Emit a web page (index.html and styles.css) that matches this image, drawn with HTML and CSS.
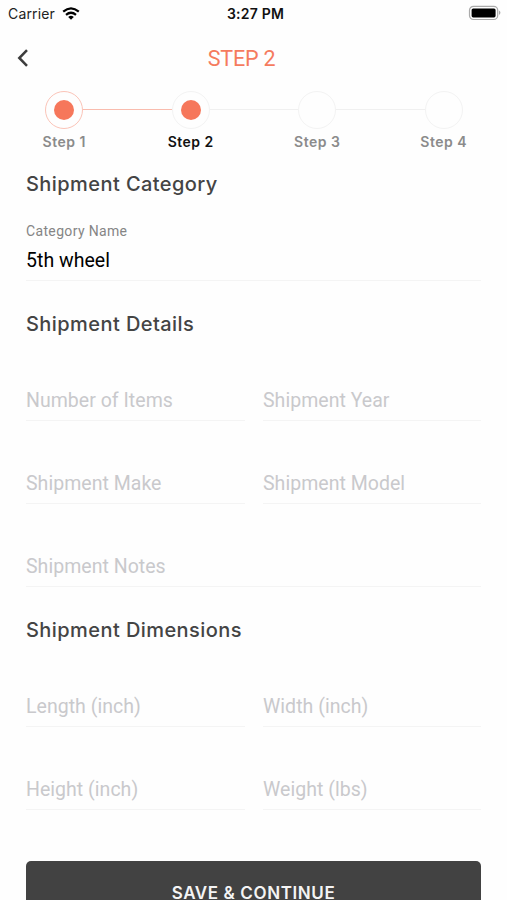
FILE: index.html
```html
<!DOCTYPE html>
<html lang="en">
<head>
<meta charset="utf-8">
<meta name="viewport" content="width=device-width, initial-scale=1">
<title>Step 2</title>
<link rel="stylesheet" href="styles.css">
</head>
<body>
<div class="status">
  <div class="carrier"><span>Carrier</span>
    <svg class="wifi" width="18" height="13" viewBox="0 0 18 13" fill="none" stroke="#000" stroke-width="2.2"><path d="M1.2 4.7Q9-2 16.8 4.7M4 7.8q5-4.1 10 0"/><path d="M6.2 9.9Q9 7.6 11.8 9.9L9 12.7Z" fill="#000" stroke="none"/></svg>
  </div>
  <span class="time">3:27 PM</span>
  <svg class="battery" width="34" height="16" viewBox="0 0 34 16"><rect x="1.5" y="1.3" width="28.2" height="13.2" rx="4" fill="#fff" stroke="#aaa" stroke-width="1.2"/><rect x="3.6" y="3.4" width="24" height="9" rx="1.6"/><path d="M31.2 5.6q2.4 2.2 0 4.5z" fill="#999"/></svg>
</div>
<header class="header">
  <svg class="back" width="12" height="18" viewBox="0 0 12 18" fill="none" stroke="#3c3c3c" stroke-width="2.5"><path d="M10 1.2 2.3 9 10 16.8"/></svg>
  <h1 class="title">STEP 2</h1>
</header>
<nav class="stepper">
  <div class="step done"><i class="ring"><i class="dot"></i></i><span>Step 1</span></div>
  <div class="step current"><i class="ring"><i class="dot"></i></i><span>Step 2</span></div>
  <div class="step"><i class="ring"></i><span>Step 3</span></div>
  <div class="step"><i class="ring"></i><span>Step 4</span></div>
</nav>
<main class="form">
  <section class="section">
    <h2 class="heading">Shipment Category</h2>
    <div class="field filled wide"><label>Category Name</label><span>5th wheel</span></div>
  </section>
  <section class="section">
    <h2 class="heading">Shipment Details</h2>
    <div class="field"><span>Number of Items</span></div>
    <div class="field"><span>Shipment Year</span></div>
    <div class="field"><span>Shipment Make</span></div>
    <div class="field"><span>Shipment Model</span></div>
    <div class="field wide"><span>Shipment Notes</span></div>
  </section>
  <section class="section">
    <h2 class="heading">Shipment Dimensions</h2>
    <div class="field"><span>Length (inch)</span></div>
    <div class="field"><span>Width (inch)</span></div>
    <div class="field"><span>Height (inch)</span></div>
    <div class="field"><span>Weight (lbs)</span></div>
  </section>
  <button class="save">SAVE &amp; CONTINUE</button>
</main>
</body>
</html>
```
FILE: styles.css
```css
* { box-sizing: border-box; }
body { margin: 0; height: 900px; overflow: hidden; background: #fefefe; color: #000; font-family: Roboto, sans-serif; }
.status { display: grid; grid-template-columns: 1fr auto 1fr; align-items: center; height: 28px; padding: 0 5px 0 8px; font-family: Inter, sans-serif; font-size: 14px; line-height: 28px; }
.carrier { display: flex; align-items: center; gap: 7px; color: #222; letter-spacing: .15px; }
.wifi { margin-top: -2px; }
.time { margin-left: 1px; font-weight: 600; font-size: 14px; letter-spacing: .2px; color: #111; }
.battery { justify-self: end; margin-top: -2px; }
.header { display: grid; grid-template-columns: 1fr auto 1fr; align-items: center; height: 60px; padding: 0 24px 0 17px; }
.back { justify-self: start; }
.title { grid-column: 2; margin: 2px 17px 0 0; font: 400 21.5px/30px Roboto, sans-serif; letter-spacing: -.2px; color: #f57b5e; }
.stepper { display: grid; grid-template-columns: repeat(4, 1fr); height: 82px; padding: 3px 0 0 1px; }
.step { position: relative; display: flex; flex-direction: column; align-items: center; font: 600 14px/20px Inter, sans-serif; letter-spacing: .5px; color: #8b8b8b; }
.ring { display: flex; align-items: center; justify-content: center; width: 38px; height: 38px; border: 1px solid #f3f3f3; border-radius: 50%; margin-bottom: 3px; }
.dot { width: 20px; height: 20px; border-radius: 50%; background: #f6775b; }
.done .ring { border-color: #fbc4b8; }
.current { color: #111; }
.step:not(:last-child)::after { content: ""; position: absolute; left: calc(50% + 19px); right: calc(-50% + 19px); top: 18px; height: 1px; background: #f0f0f0; }
.step.done:not(:last-child)::after { background: #f9bcae; }
.form { padding: 0 26px; }
.section { display: grid; grid-template-columns: 219px 218px; justify-content: space-between; margin-bottom: 29px; }
.heading { grid-column: 1 / -1; margin: 0; font: 500 20px/28px Inter, sans-serif; letter-spacing: .43px; color: #444; white-space: nowrap; }
.field { display: flex; flex-direction: column; justify-content: flex-end; height: 83px; padding-bottom: 6px; border-bottom: 1px solid #f4f4f4; font-size: 19.5px; line-height: 26px; letter-spacing: .03px; color: #c9c9cc; }
.wide { grid-column: 1 / -1; }
.filled { color: #000; }
.filled label { margin-bottom: 8px; font-size: 14px; line-height: 18px; letter-spacing: .35px; color: #858585; }
.save { display: block; width: 100%; height: 64px; margin-top: 51px; padding: 0; border: 0; border-radius: 5px; background: #424242; color: #f4f4f4; font: 600 17px/64px Inter, sans-serif; letter-spacing: .6px; }
```
